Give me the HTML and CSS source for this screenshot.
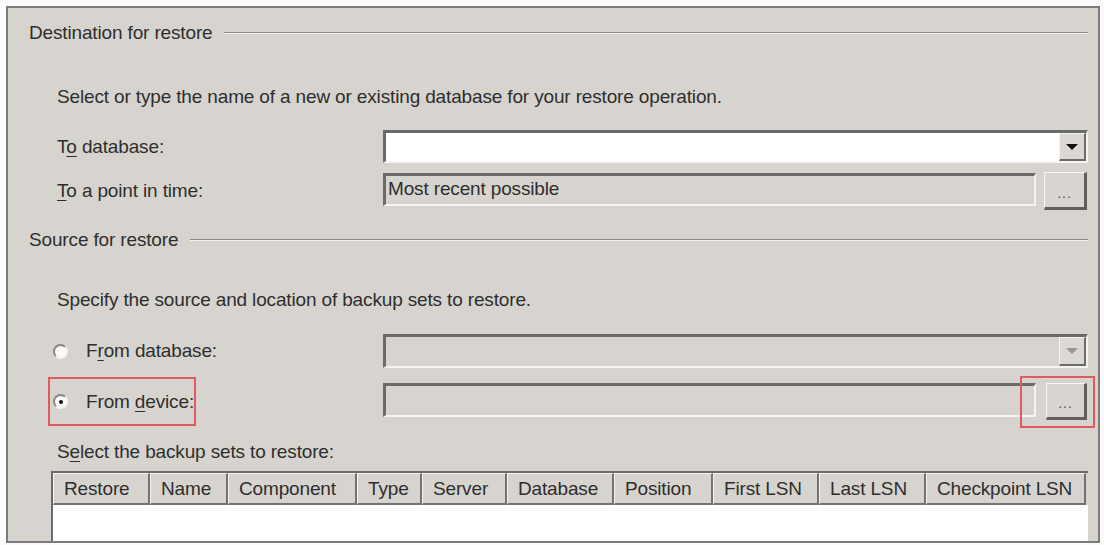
FILE: index.html
```html
<!DOCTYPE html>
<html lang="en">
<head>
    <meta charset="UTF-8">
    <title>Restore Database</title>
    <link rel="stylesheet" href="styles.css">
</head>
<body>
    <div class="frame">
        <div class="group-title"><span>Destination for restore</span><div class="rule"></div></div>
        <div class="hint hint-first">Select or type the name of a new or existing database for your restore operation.</div>

        <div class="row row-db">
            <div class="label">T<u>o</u> database:</div>
            <div class="combo">
                <div class="combo-text"></div>
                <div class="drop"><span class="arrow"></span></div>
            </div>
        </div>

        <div class="row row-time">
            <div class="label"><u>T</u>o a point in time:</div>
            <div class="field">Most recent possible</div>
            <div class="dots">...</div>
        </div>

        <div class="group-title group-source"><span>Source for restore</span><div class="rule"></div></div>
        <div class="hint hint-source">Specify the source and location of backup sets to restore.</div>

        <div class="row row-fromdb">
            <div class="label radio-label">
                <div class="mark"><span class="radio"></span><span>F<u>r</u>om database:</span></div>
            </div>
            <div class="combo disabled">
                <div class="combo-text"></div>
                <div class="drop"><span class="arrow"></span></div>
            </div>
        </div>

        <div class="row row-device">
            <div class="label radio-label">
                <div class="mark mark-radio"><span class="radio checked"></span><span>From <u>d</u>evice:</span></div>
            </div>
            <div class="field"></div>
            <div class="dots-wrap"><div class="dots">...</div></div>
        </div>

        <div class="hint hint-sets">S<u>e</u>lect the backup sets to restore:</div>

        <div class="grid">
            <div class="grid-head">
                <div class="col c-restore">Restore</div>
                <div class="col c-name">Name</div>
                <div class="col c-comp">Component</div>
                <div class="col c-type">Type</div>
                <div class="col c-server">Server</div>
                <div class="col c-db">Database</div>
                <div class="col c-pos">Position</div>
                <div class="col c-first">First LSN</div>
                <div class="col c-last">Last LSN</div>
                <div class="col c-check">Checkpoint LSN</div>
            </div>
            <div class="grid-body"></div>
        </div>
    </div>
</body>
</html>
```

FILE: styles.css
```css
body {
    margin: 0;
    padding: 0;
    background-color: #fbfbfb;
    font-family: "Liberation Sans", Arial, sans-serif;
    font-size: 19px;
    letter-spacing: -0.15px;
    color: #2e2e2e;
    overflow: hidden;
}
u {
    text-decoration-thickness: 1px;
    text-underline-offset: 3px;
}
.frame {
    margin: 6px 4px 0 6px;
    height: 537px;
    box-sizing: border-box;
    border: 2px solid #7b7b7b;
    background-color: #d7d4cf;
    padding: 0 10px 0 0;
    overflow: hidden;
}
.group-title {
    display: flex;
    align-items: center;
    height: 50px;
    padding-left: 21px;
}
.group-title span {
    margin-right: 12px;
}
.group-title .rule {
    flex: 1;
    height: 1px;
    background-color: #8c8a86;
    border-bottom: 1px solid #f2f1ee;
}
.group-source {
    margin-top: 5px;
}
.hint {
    height: 22px;
    line-height: 22px;
    padding-left: 49px;
}
.hint-first {
    margin-top: 28px;
}
.hint-source {
    margin-top: 24px;
}
.hint-sets {
    margin-top: 21px;
}
.row {
    display: flex;
    align-items: center;
}
.label {
    width: 326px;
    padding-left: 49px;
    flex-shrink: 0;
}
.row-db {
    margin-top: 22px;
    height: 33px;
}
.row-time {
    margin-top: 9px;
    height: 38px;
}
.row-fromdb {
    margin-top: 23px;
    height: 34px;
}
.row-device {
    margin-top: 15px;
    height: 37px;
}

/* sunken edit boxes */
.combo, .field {
    box-sizing: border-box;
    border-top: 3px solid #6a6a6a;
    border-left: 3px solid #6a6a6a;
    border-right: 2px solid #f4f4f2;
    border-bottom: 2px solid #f4f4f2;
}
.combo {
    flex: 1;
    height: 33px;
    display: flex;
    background-color: #fff;
}
.combo.disabled {
    background-color: #d7d4cf;
    height: 34px;
}
.combo-text {
    flex: 1;
}
.drop {
    width: 27px;
    box-sizing: border-box;
    background-color: #dcd9d4;
    border-top: 1px solid #f3f3f1;
    border-left: 1px solid #f3f3f1;
    border-right: 2px solid #6c6c6c;
    border-bottom: 2px solid #6c6c6c;
    display: flex;
    align-items: center;
    justify-content: center;
}
.arrow {
    width: 0;
    height: 0;
    border-left: 6px solid transparent;
    border-right: 6px solid transparent;
    border-top: 6px solid #111;
}
.disabled .arrow {
    border-top-color: #9a9894;
}
.field {
    width: 653px;
    height: 33px;
    align-self: flex-start;
    margin-top: 1px;
    background-color: #d7d4cf;
    padding-left: 2px;
    line-height: 26px;
}
.row-device .field {
    height: 34px;
    margin-top: 0;
}
.dots {
    box-sizing: border-box;
    width: 43px;
    height: 38px;
    margin-left: 8px;
    background-color: #d9d6d1;
    border-top: 1px solid #f5f5f3;
    border-left: 1px solid #f5f5f3;
    border-right: 3px solid #5f5f5f;
    border-bottom: 3px solid #5f5f5f;
    color: #555;
    font-size: 14px;
    letter-spacing: 1px;
    text-align: center;
    line-height: 40px;
}
.dots-wrap {
    position: relative;
    margin-left: 10px;
}
.dots-wrap .dots {
    width: 41px;
    height: 37px;
    line-height: 39px;
    margin-left: 0;
}
.dots-wrap::before {
    content: "";
    position: absolute;
    left: -26px;
    top: -7px;
    right: -8px;
    bottom: -8px;
    border: 2px solid #e0595c;
}

/* radios */
.label.radio-label {
    padding-left: 45px;
    width: 330px;
}
.mark {
    display: flex;
    align-items: center;
    height: 22px;
    line-height: 22px;
}
.radio {
    display: inline-block;
    flex-shrink: 0;
    width: 15px;
    height: 15px;
    border-radius: 50%;
    box-sizing: border-box;
    border: 2px solid #8a8884;
    border-right-color: #f4f4f2;
    border-bottom-color: #f4f4f2;
    background-color: #fafafa;
    margin-right: 18px;
    position: relative;
}
.radio.checked::after {
    content: "";
    position: absolute;
    left: 3.5px;
    top: 3.5px;
    width: 4px;
    height: 4px;
    border-radius: 50%;
    background-color: #111;
}
.mark-radio {
    position: relative;
}
.mark-radio::before {
    content: "";
    position: absolute;
    left: -5px;
    top: -14px;
    width: 144px;
    height: 45px;
    border: 2px solid #e0595c;
}

/* backup set grid */
.grid {
    margin: 8px 0 0 43px;
    height: 80px;
    box-sizing: border-box;
    border-top: 2px solid #6a6a6a;
    border-left: 2px solid #6a6a6a;
    background-color: #fff;
}
.grid-head {
    display: flex;
    height: 32px;
    background-color: #d7d4cf;
}
.col {
    box-sizing: border-box;
    border-top: 1px solid #f4f4f2;
    border-left: 1px solid #f4f4f2;
    border-right: 2px solid #727272;
    border-bottom: 2px solid #727272;
    padding-left: 10px;
    line-height: 29px;
    white-space: nowrap;
    overflow: hidden;
}
.c-restore { width: 97px; }
.c-name { width: 78px; }
.c-comp { width: 129px; }
.c-type { width: 65px; }
.c-server { width: 85px; }
.c-db { width: 107px; }
.c-pos { width: 99px; }
.c-first { width: 106px; }
.c-last { width: 107px; }
.c-check { width: 160px; }
```
